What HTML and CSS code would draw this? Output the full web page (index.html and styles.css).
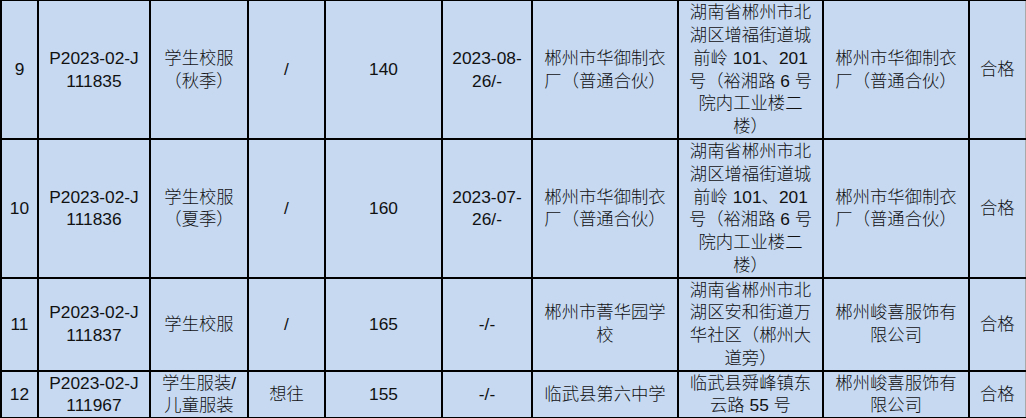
FILE: index.html
```html
<!DOCTYPE html>
<html lang="zh-CN">
<head>
<meta charset="utf-8">
<title>检验结果</title>
<link rel="stylesheet" href="styles.css">
</head>
<body>
<table class="sheet">
  <colgroup>
    <col class="c1"><col class="c2"><col class="c3"><col class="c4"><col class="c5">
    <col class="c6"><col class="c7"><col class="c8"><col class="c9"><col class="c10">
  </colgroup>
  <tbody>
    <tr class="r-tall">
      <td>9</td>
      <td>P2023-02-J<br>111835</td>
      <td>学生校服<br>（秋季）</td>
      <td>/</td>
      <td>140</td>
      <td>2023-08-<br>26/-</td>
      <td>郴州市华御制衣<br>厂（普通合伙）</td>
      <td>湖南省郴州市北<br>湖区增福街道城<br>前岭 101、201<br>号（裕湘路 6 号<br>院内工业楼二<br>楼）</td>
      <td>郴州市华御制衣<br>厂（普通合伙）</td>
      <td>合格</td>
    </tr>
    <tr class="r-tall2">
      <td>10</td>
      <td>P2023-02-J<br>111836</td>
      <td>学生校服<br>（夏季）</td>
      <td>/</td>
      <td>160</td>
      <td>2023-07-<br>26/-</td>
      <td>郴州市华御制衣<br>厂（普通合伙）</td>
      <td>湖南省郴州市北<br>湖区增福街道城<br>前岭 101、201<br>号（裕湘路 6 号<br>院内工业楼二<br>楼）</td>
      <td>郴州市华御制衣<br>厂（普通合伙）</td>
      <td>合格</td>
    </tr>
    <tr class="r-mid">
      <td>11</td>
      <td>P2023-02-J<br>111837</td>
      <td>学生校服</td>
      <td>/</td>
      <td>165</td>
      <td>-/-</td>
      <td>郴州市菁华园学<br>校</td>
      <td>湖南省郴州市北<br>湖区安和街道万<br>华社区（郴州大<br>道旁）</td>
      <td>郴州峻喜服饰有<br>限公司</td>
      <td>合格</td>
    </tr>
    <tr class="r-low">
      <td>12</td>
      <td>P2023-02-J<br>111967</td>
      <td>学生服装/<br>儿童服装</td>
      <td>想往</td>
      <td>155</td>
      <td>-/-</td>
      <td>临武县第六中学</td>
      <td>临武县舜峰镇东<br>云路 55 号</td>
      <td>郴州峻喜服饰有<br>限公司</td>
      <td>合格</td>
    </tr>
  </tbody>
</table>
</body>
</html>
```
FILE: styles.css
```css
html, body {
  margin: 0;
  padding: 0;
  background: #ffffff;
}

.sheet {
  margin: -1px 0 0 0;
  border-collapse: collapse;
  table-layout: fixed;
  width: 1025px;
  background: #c6d9f1;
  font-family: "Liberation Sans", "Noto Sans CJK SC", sans-serif;
  font-size: 17.33px;
  font-weight: 300;
  line-height: 22.75px;
  color: #111111;
}

.sheet td {
  border: 2px solid #000000;
  padding: 0;
  text-align: center;
  vertical-align: middle;
  white-space: nowrap;
}

.sheet td:last-child {
  border-right: 1px solid #a9a9a9;
}

.c1 { width: 37px; }
.c2 { width: 112px; }
.c3 { width: 98px; }
.c4 { width: 77px; }
.c5 { width: 117px; }
.c6 { width: 90px; }
.c7 { width: 146px; }
.c8 { width: 145px; }
.c9 { width: 146px; }
.c10 { width: 56px; }

.r-tall { height: 139px; }
.r-tall2 { height: 138px; }
.r-mid { height: 92px; }
.r-low { height: 46px; }
```
